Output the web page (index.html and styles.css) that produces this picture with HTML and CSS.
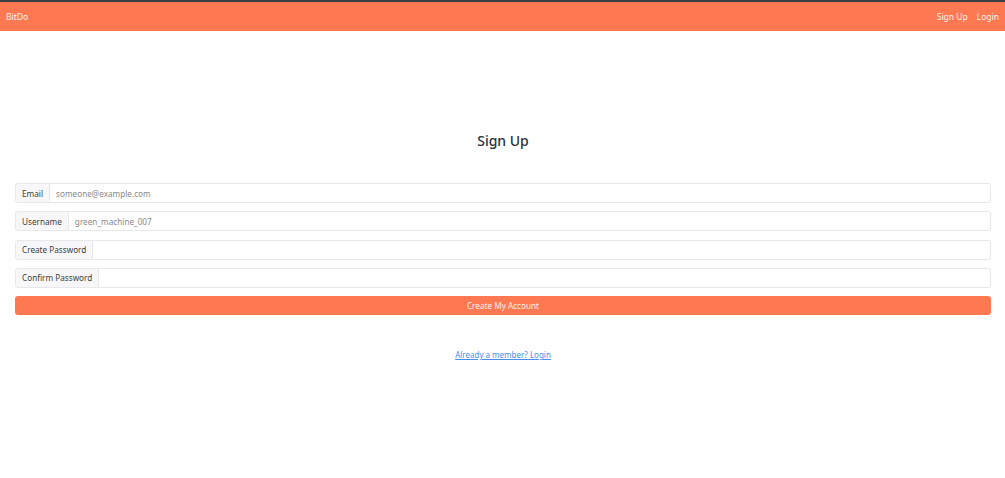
FILE: index.html
```html
<!DOCTYPE html>
<html lang="en">
<head>
  <meta charset="UTF-8" />
  <meta name="viewport" content="width=device-width, initial-scale=1.0" />
  <title>BitDo - Sign Up</title>
  <link rel="stylesheet" href="styles.css">
</head>
<body>
  <nav class="navbar">
    <a class="brand" href="#">BitDo</a>
    <div class="nav-links">
      <a href="#">Sign Up</a>
      <a href="#">Login</a>
    </div>
  </nav>

  <main class="container">
    <h1 class="title">Sign Up</h1>

    <form class="signup">
      <div class="input-group">
        <span class="addon">Email</span>
        <input type="email" placeholder="someone@example.com">
      </div>
      <div class="input-group">
        <span class="addon">Username</span>
        <input type="text" placeholder="green_machine_007">
      </div>
      <div class="input-group">
        <span class="addon">Create Password</span>
        <input type="password">
      </div>
      <div class="input-group">
        <span class="addon">Confirm Password</span>
        <input type="password">
      </div>
      <button type="submit" class="btn">Create My Account</button>
    </form>

    <p class="switch"><a href="#">Already a member? Login</a></p>
  </main>
</body>
</html>
```

FILE: styles.css
```css
* {
  box-sizing: border-box;
  margin: 0;
  padding: 0;
}

body {
  font-family: "Noto Sans", "Open Sans", sans-serif;
  background-color: #fff;
  color: #3e3f3a;
}

.navbar {
  background-color: #fe7852;
  border-top: 2px solid #3b3e47;
  height: 31px;
  display: flex;
  align-items: center;
  justify-content: space-between;
  padding: 0 6px;
}

.navbar a {
  color: #fff3ee;
  text-decoration: none;
  font-size: 8.5px;
}

.nav-links {
  display: flex;
  gap: 9px;
  padding-right: 0;
}

.container {
  padding: 0 14px 0 15px;
}

.title {
  text-align: center;
  font-size: 14px;
  font-weight: 500;
  color: #2c313a;
  margin-top: 100px;
  margin-bottom: 33px;
}

.signup {
  display: flex;
  flex-direction: column;
  gap: 8.3px;
}

.input-group {
  display: flex;
  height: 20px;
}

.addon {
  display: flex;
  align-items: center;
  padding: 0 6px;
  font-size: 8.2px;
  color: #3e3f3a;
  background-color: #f7f7f9;
  border: 1px solid #e8e8e8;
  border-radius: 3px 0 0 3px;
  white-space: nowrap;
}

.input-group input {
  flex: 1;
  border: 1px solid #e8e8e8;
  border-left: none;
  border-radius: 0 3px 3px 0;
  padding: 0 6px;
  font-family: inherit;
  font-size: 8.2px;
  color: #555;
  outline: none;
}

.input-group input::placeholder {
  color: #8a8a8a;
}

.btn {
  height: 19px;
  border: none;
  border-radius: 3px;
  background-color: #fe7852;
  color: #fff3ee;
  font-family: inherit;
  font-size: 8.2px;
  cursor: pointer;
}

.switch {
  text-align: center;
  margin-top: 34px;
  font-size: 8px;
}

.switch a {
  color: #4a8ef0;
}
```
